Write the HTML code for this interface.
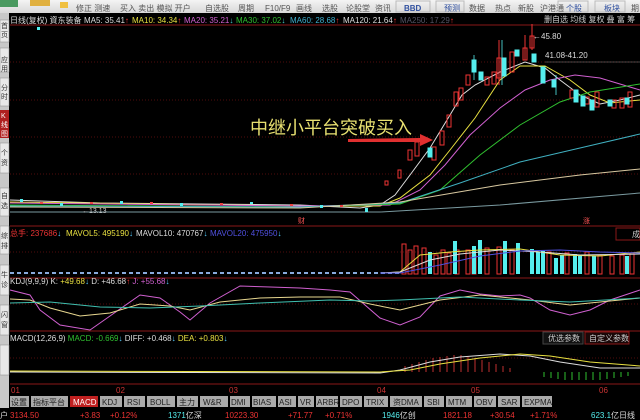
<!DOCTYPE html><html><head><meta charset="utf-8"><style>
body{margin:0;width:640px;height:420px;background:#000;overflow:hidden;font-family:"Liberation Sans","Noto Sans CJK SC",sans-serif}
</style></head><body>
<svg width="640" height="420" style="position:absolute;left:0;top:0" font-family="Liberation Sans, Noto Sans CJK SC, sans-serif">
<defs><linearGradient id="tb" x1="0" y1="0" x2="0" y2="1"><stop offset="0" stop-color="#f4f4f4"/><stop offset="1" stop-color="#d8d8d8"/></linearGradient></defs>
<rect x="0" y="0" width="640" height="13" fill="url(#tb)"/>
<rect x="0" y="0" width="18" height="7" fill="#4a9a60"/>
<rect x="30" y="0" width="20" height="6" fill="#e0b040"/>
<rect x="60" y="2" width="8" height="6" fill="#f0c040"/>
<g font-size="8" fill="#555">
<text x="76" y="11">修正 测速</text><text x="120" y="11">买入 卖出 模拟 开户</text>
<text x="205" y="11">自选股</text><text x="238" y="11">周期</text><text x="265" y="11">F10/F9</text><text x="296" y="11">画线</text>
<text x="322" y="11">选股</text><text x="346" y="11">论股堂</text><text x="375" y="11">资讯</text>
<text x="404" y="11" fill="#3050a0" font-weight="bold">BBD</text><text x="444" y="11" fill="#3050a0">预测</text>
<text x="469" y="11">数据</text><text x="495" y="11">热点</text><text x="518" y="11">新股</text><text x="540" y="11">沪港通</text>
<text x="566" y="11" fill="#3050a0">个股</text><text x="604" y="11" fill="#3050a0">板块</text><text x="631" y="11">期</text>
</g>
<g stroke="#bbb" fill="none"><rect x="396" y="1" width="34" height="11"/><rect x="436" y="1" width="28" height="11"/><rect x="558" y="1" width="30" height="11"/><rect x="595" y="1" width="30" height="11"/></g>
<rect x="0" y="13" width="9" height="395" fill="#c8c8c8"/>
<g fill="#e8e8e8" stroke="#888" stroke-width="0.5">
<rect x="0" y="20" width="9" height="22"/><rect x="0" y="48" width="9" height="24"/><rect x="0" y="78" width="9" height="28"/>
<rect x="0" y="143" width="9" height="30"/><rect x="0" y="188" width="9" height="28"/><rect x="0" y="226" width="9" height="28"/><rect x="0" y="265" width="9" height="30"/><rect x="0" y="305" width="9" height="30"/><rect x="0" y="345" width="9" height="30"/></g>
<rect x="0" y="110" width="9" height="28" fill="#b02020"/>
<g font-size="7" fill="#333"><text x="1" y="28">首</text><text x="1" y="37">页</text><text x="1" y="62">应</text><text x="1" y="71">用</text><text x="1" y="90">分</text><text x="1" y="99">时</text>
<text x="1" y="155">个</text><text x="1" y="165">资</text><text x="1" y="198">自</text><text x="1" y="208">选</text><text x="1" y="238">综</text><text x="1" y="248">排</text><text x="1" y="277">牛</text><text x="1" y="287">诊</text><text x="1" y="317">闪</text><text x="1" y="327">窗</text></g>
<g font-size="7" fill="#fff"><text x="1" y="118">K</text><text x="1" y="127">线</text><text x="1" y="136">图</text></g>
<g font-size="8">
<text x="10" y="23" fill="#ddd">日线(复权) 資东装备</text>
<text x="84" y="23" fill="#ddd">MA5: 35.41<tspan fill="#f33">↑</tspan></text>
<text x="132" y="23" fill="#e8e040">MA10: 34.34<tspan fill="#f33">↑</tspan></text>
<text x="184" y="23" fill="#d060d0">MA20: 35.21<tspan fill="#4cc">↓</tspan></text>
<text x="236" y="23" fill="#30c030">MA30: 37.02<tspan fill="#4cc">↓</tspan></text>
<text x="290" y="23" fill="#40b0d0">MA60: 28.68<tspan fill="#f33">↑</tspan></text>
<text x="343" y="23" fill="#ddd">MA120: 21.64<tspan fill="#f33">↑</tspan></text>
<text x="400" y="23" fill="#556">MA250: 17.29<tspan fill="#f33">↑</tspan></text>
<text x="544" y="22" fill="#ccc">删自选 均线 复权 叠 富 筹</text>
</g>
<g stroke="#6a1010" stroke-dasharray="1,2" stroke-width="0.7">
<line x1="10" y1="62" x2="640" y2="62"/><line x1="10" y1="100" x2="640" y2="100"/><line x1="10" y1="137" x2="640" y2="137"/><line x1="10" y1="174" x2="640" y2="174"/>
<line x1="10" y1="252" x2="640" y2="252"/><line x1="10" y1="304" x2="640" y2="304"/><line x1="10" y1="358" x2="640" y2="358"/></g>
<g stroke="#8a1818" stroke-width="1"><line x1="10" y1="226" x2="640" y2="226"/><line x1="10" y1="278" x2="640" y2="278"/><line x1="10" y1="331" x2="640" y2="331"/><line x1="10" y1="384" x2="640" y2="384"/><line x1="10" y1="25" x2="640" y2="25"/></g>
<g fill="none" stroke-width="1">
<polyline stroke="#ddd" points="10,200 100,203 200,204 300,205 360,208 380,205 395,195 410,175 430,148 450,115 462,95 475,85 500,72 525,62 545,68 560,80 580,95 600,104 620,100 640,95"/>
<polyline stroke="#e8e040" points="10,202 150,204 300,206 380,206 400,198 430,175 450,150 475,118 500,80 520,66 545,66 570,80 590,95 610,103 640,100"/>
<polyline stroke="#d060d0" points="10,203 300,206 390,205 420,190 445,165 470,135 500,108 525,90 550,80 575,75 600,78 640,90"/>
<polyline stroke="#30c030" points="10,205 300,207 400,204 440,190 480,155 520,125 560,102 590,92 640,84"/>
<polyline stroke="#40b0c0" points="10,206 300,207 400,203 460,183 520,162 580,148 640,134"/>
<polyline stroke="#d8c8a0" points="10,207 300,208 400,202 500,185 580,175 640,169"/>
<polyline stroke="#7a9aa0" points="10,212 380,212 500,205 640,193"/>
</g>
<g fill="#5ee" ><rect x="20" y="199" width="3" height="3"/><rect x="60" y="203" width="3" height="3"/><rect x="120" y="201" width="3" height="3"/><rect x="180" y="203" width="3" height="3"/><rect x="250" y="202" width="3" height="2"/><rect x="320" y="205" width="3" height="3"/><rect x="365" y="208" width="3" height="4"/><rect x="37" y="27" width="3" height="3"/></g>
<g fill="#e44"><rect x="40" y="202" width="3" height="2"/><rect x="90" y="202" width="3" height="2"/><rect x="150" y="202" width="3" height="2"/><rect x="220" y="203" width="3" height="2"/><rect x="290" y="204" width="3" height="2"/><rect x="340" y="205" width="3" height="2"/></g>
<text x="82" y="213" font-size="7" fill="#ccc">←13.13</text>
<g stroke="#e33" fill="none" stroke-width="1">
<rect x="385" y="181" width="3" height="4"/><rect x="398" y="170" width="3" height="8"/><rect x="408" y="150" width="4" height="10"/><rect x="415" y="142" width="4" height="14"/><rect x="432" y="147" width="4" height="13"/><rect x="440" y="131" width="4" height="14"/><rect x="447" y="115" width="4" height="12"/><rect x="454" y="92" width="4" height="14"/><rect x="459" y="88" width="4" height="12"/><rect x="466" y="75" width="4" height="10"/><rect x="485" y="77" width="4" height="8"/><rect x="492" y="72" width="4" height="12"/><rect x="497" y="58" width="4" height="20"/><rect x="510" y="52" width="4" height="20"/><rect x="523" y="48" width="4" height="12"/><rect x="530" y="36" width="4" height="12"/><rect x="570" y="90" width="4" height="8"/><rect x="585" y="97" width="4" height="7"/><rect x="595" y="92" width="4" height="15"/><rect x="612" y="100" width="4" height="8"/><rect x="620" y="98" width="4" height="10"/><rect x="628" y="92" width="4" height="15"/>
<line x1="499" y1="40" x2="499" y2="85"/><line x1="525" y1="35" x2="525" y2="60"/><line x1="532" y1="24" x2="532" y2="50"/></g>
<g fill="#5ee" stroke="#5ee"><rect x="428" y="148" width="4" height="9"/><rect x="472" y="60" width="4" height="12"/><rect x="479" y="72" width="4" height="8"/><rect x="502" y="58" width="4" height="18"/><rect x="515" y="50" width="4" height="6"/><rect x="532" y="54" width="4" height="8"/><rect x="541" y="67" width="4" height="16"/><rect x="552" y="80" width="4" height="7"/><rect x="574" y="90" width="4" height="12"/><rect x="581" y="96" width="4" height="10"/><rect x="590" y="100" width="4" height="10"/><rect x="608" y="100" width="4" height="6"/><rect x="625" y="98" width="4" height="6"/>
<line x1="502" y1="40" x2="502" y2="85" stroke-width="0.8"/><line x1="474" y1="55" x2="474" y2="80" stroke-width="0.8"/><line x1="556" y1="75" x2="556" y2="95" stroke-width="0.8"/></g>
<text x="533" y="39" font-size="8" fill="#ddd">←45.80</text>
<text x="545" y="58" font-size="8" fill="#ddd">41.08-41.20</text>
<line x1="545" y1="62" x2="640" y2="62" stroke="#888" stroke-width="0.6"/>
<text x="250" y="134" font-size="18" fill="#e8e070" font-family="Noto Sans CJK SC, sans-serif">中继小平台突破买入</text>
<polygon points="348,139 420,138 420,134 433,140 420,146 420,142 348,142" fill="#e03030"/>
<text x="298" y="223" font-size="7" fill="#f55">财</text><text x="583" y="223" font-size="7" fill="#f55">涨</text>
<g font-size="8"><text x="10" y="236" fill="#e33">总手: 237686<tspan fill="#5cf">↓</tspan></text><text x="66" y="236" fill="#e8e040">MAVOL5: 495190<tspan fill="#5cf">↓</tspan></text><text x="136" y="236" fill="#ddd">MAVOL10: 470767<tspan fill="#5cf">↓</tspan></text><text x="210" y="236" fill="#5050e0">MAVOL20: 475950<tspan fill="#5cf">↓</tspan></text>
<text x="10" y="284" fill="#ddd">KDJ(9,9,9) K: <tspan fill="#e8e040">+49.68</tspan><tspan fill="#5cf">↓</tspan> <tspan fill="#ddd">D: +46.68</tspan><tspan fill="#f33">↑</tspan> <tspan fill="#d060d0">J: +55.68</tspan><tspan fill="#5cf">↓</tspan></text>
<text x="10" y="341" fill="#ddd">MACD(12,26,9) <tspan fill="#30c030">MACD: -0.669</tspan><tspan fill="#5cf">↓</tspan> DIFF: +0.468<tspan fill="#5cf">↓</tspan> <tspan fill="#e8e040">DEA: +0.803</tspan><tspan fill="#5cf">↓</tspan></text></g>
<line x1="10" y1="273" x2="400" y2="273" stroke="#8ad" stroke-width="2" stroke-dasharray="4,3"/>
<g stroke="#e33" fill="none"><rect x="402" y="244" width="4" height="30"/><rect x="408" y="250" width="4" height="24"/><rect x="414" y="246" width="4" height="28"/><rect x="422" y="248" width="4" height="26"/><rect x="434" y="255" width="4" height="19"/><rect x="441" y="250" width="4" height="24"/><rect x="447" y="253" width="4" height="21"/><rect x="455" y="250" width="4" height="24"/><rect x="466" y="250" width="4" height="24"/><rect x="472" y="255" width="4" height="19"/><rect x="485" y="248" width="4" height="26"/><rect x="497" y="247" width="4" height="27"/><rect x="510" y="250" width="4" height="24"/><rect x="547" y="252" width="4" height="22"/><rect x="565" y="253" width="4" height="21"/><rect x="585" y="252" width="4" height="22"/><rect x="598" y="255" width="4" height="19"/><rect x="610" y="256" width="4" height="18"/><rect x="620" y="255" width="4" height="19"/><rect x="630" y="253" width="4" height="21"/></g>
<g fill="#5ee"><rect x="428" y="252" width="4" height="22"/><rect x="453" y="241" width="4" height="33"/><rect x="472" y="246" width="4" height="28"/><rect x="478" y="240" width="4" height="34"/><rect x="503" y="241" width="4" height="33"/><rect x="516" y="243" width="4" height="31"/><rect x="530" y="249" width="4" height="25"/><rect x="536" y="252" width="4" height="22"/><rect x="541" y="251" width="4" height="23"/><rect x="554" y="258" width="4" height="16"/><rect x="560" y="255" width="4" height="19"/><rect x="573" y="254" width="4" height="20"/><rect x="578" y="256" width="4" height="18"/><rect x="592" y="256" width="4" height="18"/><rect x="625" y="256" width="4" height="18"/></g>
<g fill="none"><polyline stroke="#e8e040" points="380,273 400,272 420,255 450,252 480,250 520,249 560,255 600,256 640,252"/><polyline stroke="#ddd" points="380,273 400,272 430,260 460,254 500,250 540,252 580,255 640,254"/><polyline stroke="#5050e0" points="380,273 400,273 440,265 480,256 520,251 560,250 600,252 640,253"/></g>
<rect x="616" y="228" width="24" height="12" fill="none" stroke="#8a1818"/><text x="632" y="237" font-size="8" fill="#ccc">成</text>
<g fill="none">
<polyline stroke="#d060d0" points="10,290 30,295 40,310 60,325 90,330 110,316 140,295 160,298 180,312 190,320 210,303 240,286 270,287 300,288 330,290 350,292 380,318 400,325 420,317 440,296 460,290 480,294 500,296 520,295 530,298 550,310 570,315 590,310 610,300 640,290"/>
<polyline stroke="#e8d890" points="10,299 30,300 50,308 80,316 110,313 140,304 170,306 190,310 220,302 260,298 300,297 340,297 370,304 400,310 440,300 480,295 530,300 570,305 600,302 640,298"/>
<polyline stroke="#40c0b0" points="10,303 50,302 100,307 150,308 200,306 260,303 330,300 370,301 400,300 460,297 520,300 570,302 640,298"/>
</g>
<g stroke="#c03030" stroke-width="1"><line x1="405" y1="372" x2="405" y2="366"/><line x1="412" y1="372" x2="412" y2="364"/><line x1="419" y1="372" x2="419" y2="362"/><line x1="426" y1="372" x2="426" y2="360"/><line x1="433" y1="372" x2="433" y2="358"/><line x1="440" y1="372" x2="440" y2="357"/><line x1="447" y1="372" x2="447" y2="356"/><line x1="454" y1="372" x2="454" y2="355"/><line x1="461" y1="372" x2="461" y2="355"/><line x1="468" y1="372" x2="468" y2="356"/><line x1="475" y1="372" x2="475" y2="358"/><line x1="482" y1="372" x2="482" y2="360"/><line x1="489" y1="372" x2="489" y2="362"/><line x1="496" y1="372" x2="496" y2="364"/><line x1="503" y1="372" x2="503" y2="366"/><line x1="510" y1="372" x2="510" y2="368"/></g>
<g stroke="#30c030"><line x1="544" y1="372" x2="544" y2="377"/><line x1="551" y1="372" x2="551" y2="378"/><line x1="558" y1="372" x2="558" y2="379"/><line x1="565" y1="372" x2="565" y2="380"/><line x1="572" y1="372" x2="572" y2="380"/><line x1="579" y1="372" x2="579" y2="380"/><line x1="586" y1="372" x2="586" y2="380"/><line x1="593" y1="372" x2="593" y2="380"/><line x1="600" y1="372" x2="600" y2="380"/><line x1="607" y1="372" x2="607" y2="379"/><line x1="614" y1="372" x2="614" y2="378"/><line x1="621" y1="372" x2="621" y2="377"/><line x1="628" y1="372" x2="628" y2="376"/></g>
<g fill="none"><polyline stroke="#ddd" points="10,372 380,373 400,370 430,362 460,357 500,354 530,356 560,362 600,368 640,368"/><polyline stroke="#e8e040" points="10,371 380,372 410,370 440,364 480,358 520,354 550,356 590,362 640,366"/></g>
<rect x="543" y="332" width="40" height="12" fill="#111" stroke="#444"/><text x="548" y="341" font-size="8" fill="#ccc">优选参数</text>
<rect x="585" y="332" width="44" height="12" fill="#1a0808" stroke="#8a1818"/><text x="589" y="341" font-size="8" fill="#ccc">自定义参数</text>
<g font-size="8" fill="#c33"><text x="11" y="393">01</text><text x="116" y="393">02</text><text x="229" y="393">03</text><text x="377" y="393">04</text><text x="471" y="393">05</text><text x="599" y="393">06</text></g>
<rect x="9" y="395" width="631" height="13" fill="#000"/>
<g font-size="8" fill="#222">
<rect x="10" y="396" width="19" height="11" fill="#aaa"/><text x="11" y="405">设置</text>
<rect x="31" y="396" width="37" height="11" fill="#aaa"/><text x="33" y="405">指标平台</text>
<rect x="70" y="396" width="28" height="11" fill="#c02020"/><text x="73" y="405" fill="#fff">MACD</text>
<rect x="100" y="396" width="22" height="11" fill="#aaa"/><text x="102" y="405">KDJ</text>
<rect x="124" y="396" width="21" height="11" fill="#aaa"/><text x="127" y="405">RSI</text>
<rect x="147" y="396" width="28" height="11" fill="#aaa"/><text x="150" y="405">BOLL</text>
<rect x="177" y="396" width="21" height="11" fill="#aaa"/><text x="179" y="405">主力</text>
<rect x="200" y="396" width="28" height="11" fill="#aaa"/><text x="203" y="405">W&amp;R</text>
<rect x="230" y="396" width="20" height="11" fill="#aaa"/><text x="231" y="405">DMI</text>
<rect x="252" y="396" width="24" height="11" fill="#aaa"/><text x="253" y="405">BIAS</text>
<rect x="278" y="396" width="18" height="11" fill="#aaa"/><text x="279" y="405">ASI</text>
<rect x="298" y="396" width="16" height="11" fill="#aaa"/><text x="300" y="405">VR</text>
<rect x="316" y="396" width="22" height="11" fill="#aaa"/><text x="317" y="405">ARBR</text>
<rect x="340" y="396" width="22" height="11" fill="#aaa"/><text x="342" y="405">DPO</text>
<rect x="364" y="396" width="24" height="11" fill="#aaa"/><text x="366" y="405">TRIX</text>
<rect x="390" y="396" width="32" height="11" fill="#aaa"/><text x="393" y="405">资DMA</text>
<rect x="424" y="396" width="20" height="11" fill="#aaa"/><text x="427" y="405">SBI</text>
<rect x="446" y="396" width="26" height="11" fill="#aaa"/><text x="448" y="405">MTM</text>
<rect x="474" y="396" width="22" height="11" fill="#aaa"/><text x="476" y="405">OBV</text>
<rect x="498" y="396" width="22" height="11" fill="#aaa"/><text x="501" y="405">SAR</text>
<rect x="522" y="396" width="30" height="11" fill="#aaa"/><text x="524" y="405">EXPMA</text>
</g>
<g font-size="8"><text x="0" y="418" fill="#ddd">户</text><text x="10" y="418" fill="#e33">3134.50</text><text x="80" y="418" fill="#e33">+3.83</text><text x="110" y="418" fill="#e33">+0.12%</text>
<text x="168" y="418" fill="#5ee">1371<tspan fill="#ddd">亿深</tspan></text><text x="225" y="418" fill="#e33">10223.30</text><text x="288" y="418" fill="#e33">+71.77</text><text x="325" y="418" fill="#e33">+0.71%</text>
<text x="382" y="418" fill="#5ee">1946<tspan fill="#ddd">亿创</tspan></text><text x="443" y="418" fill="#e33">1821.18</text><text x="490" y="418" fill="#e33">+30.54</text><text x="530" y="418" fill="#e33">+1.71%</text><text x="591" y="418" fill="#5ee">623.1<tspan fill="#ddd">亿日线</tspan></text></g>
</svg>
</body></html>
